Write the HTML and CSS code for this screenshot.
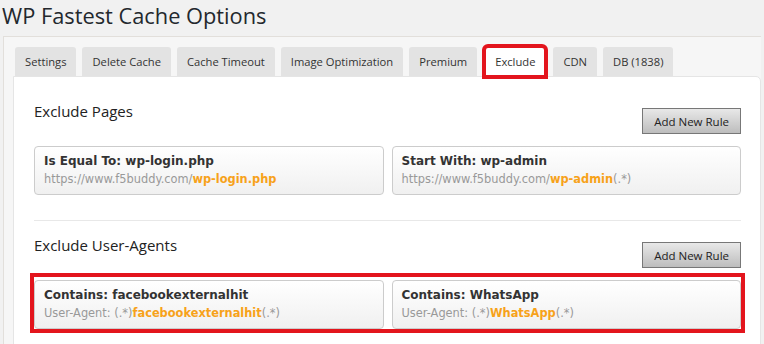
FILE: index.html
```html
<!DOCTYPE html>
<html lang="en">
<head>
    <meta charset="UTF-8">
    <title>WP Fastest Cache Options</title>
    <link rel="stylesheet" href="styles.css">
</head>
<body>
    <h1>WP Fastest Cache Options</h1>
    <div class="wrap">
        <div class="tabs">
            <div class="tab">Settings</div>
            <div class="tab">Delete Cache</div>
            <div class="tab">Cache Timeout</div>
            <div class="tab">Image Optimization</div>
            <div class="tab">Premium</div>
            <div class="tab active">Exclude</div>
            <div class="tab">CDN</div>
            <div class="tab">DB (1838)</div>
        </div>

        <div class="panel">
            <div class="section-head">
                <h3>Exclude Pages</h3>
                <button>Add New Rule</button>
            </div>
            <div class="rules">
                <div class="rule">
                    <div class="rule-title">Is Equal To: wp-login.php</div>
                    <div class="rule-sub">https://www.f5buddy.com/<b>wp-login.php</b></div>
                </div>
                <div class="rule">
                    <div class="rule-title">Start With: wp-admin</div>
                    <div class="rule-sub">https://www.f5buddy.com/<b>wp-admin</b>(.*)</div>
                </div>
            </div>

            <hr>

            <div class="section-head second">
                <h3>Exclude User-Agents</h3>
                <button>Add New Rule</button>
            </div>
            <div class="rules marked">
                <div class="rule">
                    <div class="rule-title">Contains: facebookexternalhit</div>
                    <div class="rule-sub">User-Agent: (.*)<b>facebookexternalhit</b>(.*)</div>
                </div>
                <div class="rule">
                    <div class="rule-title">Contains: WhatsApp</div>
                    <div class="rule-sub">User-Agent: (.*)<b>WhatsApp</b>(.*)</div>
                </div>
            </div>
        </div>
    </div>
</body>
</html>
```

FILE: styles.css
```css
body {
    margin: 0;
    background-color: #f1f1f1;
    font-family: "Open Sans", sans-serif;
    color: #23282d;
    height: 344px;
    overflow: hidden;
}

h1 {
    margin: 0;
    padding: 2px 0 0 2px;
    height: 34px;
    font-size: 21.8px;
    font-weight: 400;
    line-height: 28px;
}

.wrap {
    margin: 0 3px 0 3px;
    border-top: 1px solid #e2dfdb;
    border-left: 1px solid #e2dfdb;
    background-color: #f6f6f6;
    padding: 10px 0 0 9px;
}

.tabs {
    display: flex;
    gap: 6px;
    padding-left: 2px;
}

.tab {
    height: 29px;
    line-height: 29px;
    padding: 0 10px;
    background-color: #e3e3e3;
    border-radius: 3px 3px 0 0;
    font-size: 11.2px;
    color: #333;
}

.tab.active {
    background-color: #fff;
    outline: 4px solid #e3151d;
    outline-offset: -1px;
    margin: 0 2px;
}

.panel {
    background-color: #fff;
    border: 1px solid #e5e5e5;
    border-radius: 0 5px 0 0;
    padding: 0 19px 0 20px;
    height: 267px;
}

.section-head {
    display: flex;
    justify-content: space-between;
    align-items: flex-end;
    height: 57px;
}

.section-head.second {
    height: 47px;
}

h3 {
    margin: 0 0 13px 0;
    font-size: 15px;
    font-weight: 400;
    color: #222;
}

button {
    height: 26px;
    padding: 0 11px;
    font-family: "Open Sans", sans-serif;
    font-size: 11.5px;
    color: #222;
    border: 1px solid #777;
    background: linear-gradient(#e8e8e8, #bdbdbd);
    cursor: pointer;
}

.rules {
    display: grid;
    grid-template-columns: 1fr 1fr;
    gap: 8px;
    margin-top: 12px;
}

.rules.marked {
    margin: 5px -4px 0 -4px;
    border: 4px solid #e3151d;
    padding-top: 3px;
}

.rule {
    box-sizing: border-box;
    height: 49px;
    padding: 4px 9px 0 9px;
    border: 1px solid #ccc;
    border-radius: 4px;
    background: linear-gradient(#fff, #f0f0f0);
    font-family: "DejaVu Sans", Verdana, sans-serif;
}

.rule-title {
    font-size: 12px;
    font-weight: bold;
    color: #333;
    line-height: 20px;
}

.rule-sub {
    font-size: 11.4px;
    color: #999;
    line-height: 16px;
}

.rule-sub b {
    color: #f7a21a;
}

hr {
    margin: 25px 0 0 0;
    border: none;
    border-top: 1px solid #e8e8e8;
}
```
